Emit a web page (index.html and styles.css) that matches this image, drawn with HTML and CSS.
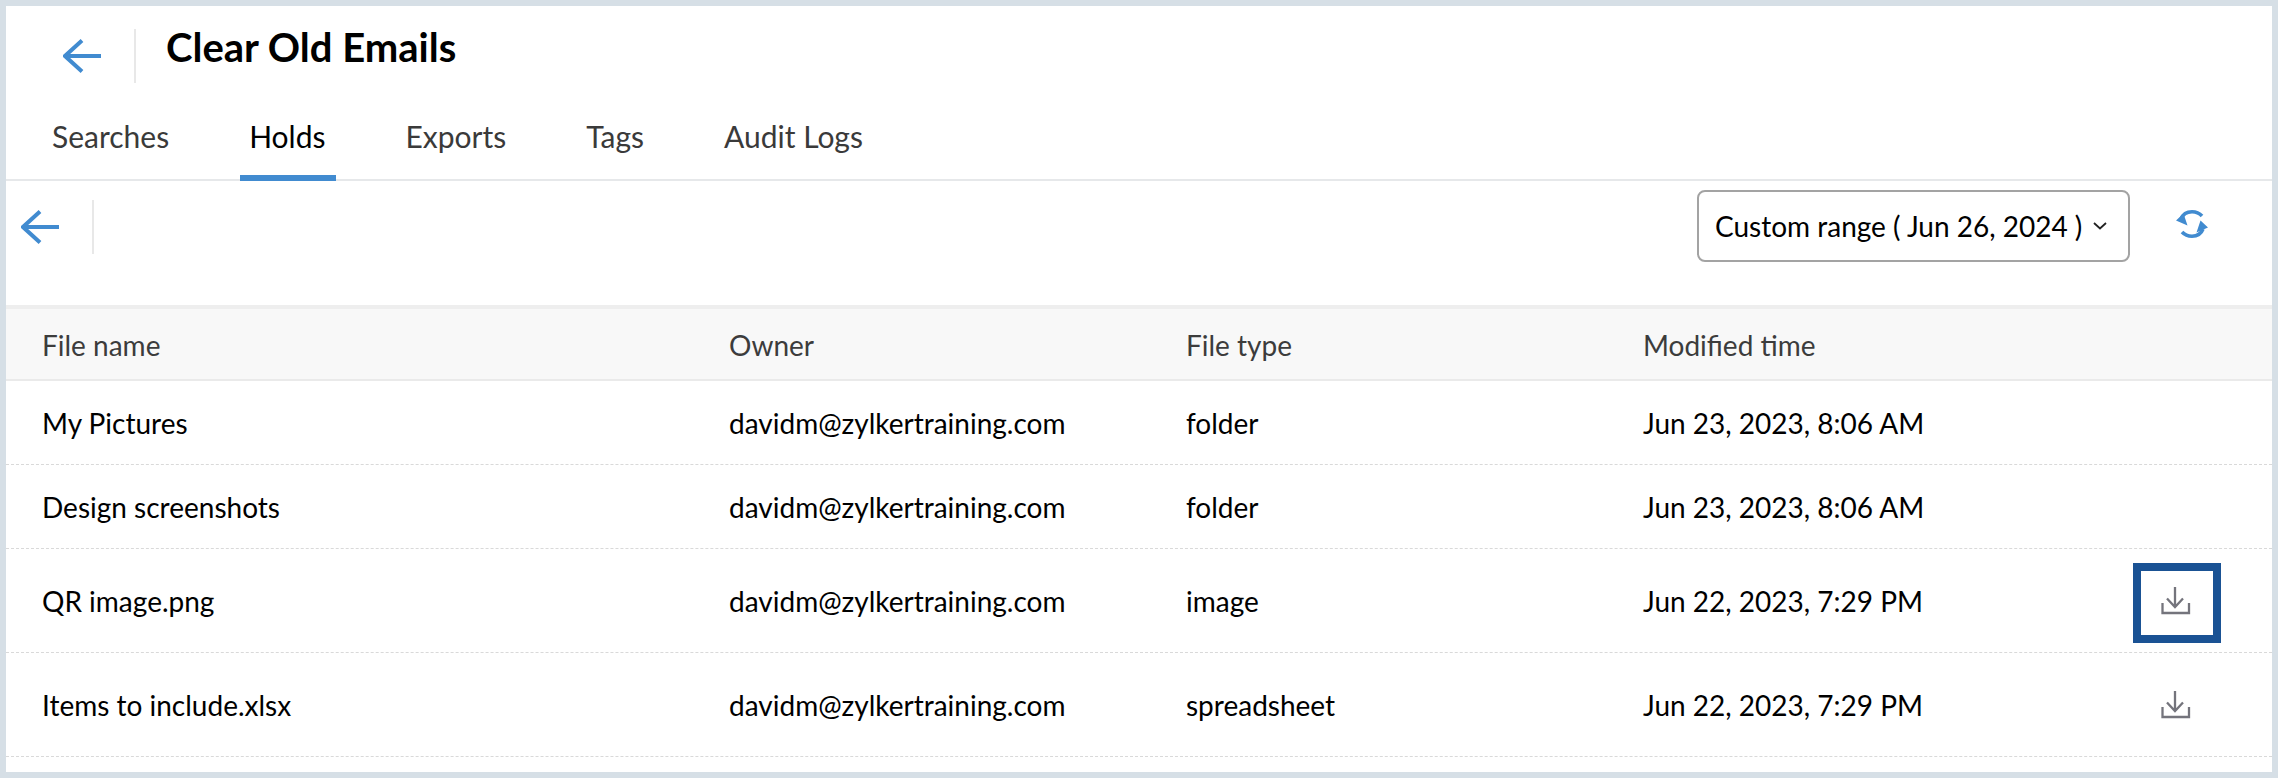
FILE: index.html
```html
<!DOCTYPE html>
<html lang="en">
<head>
<meta charset="utf-8">
<title>Clear Old Emails</title>
<link rel="stylesheet" href="styles.css">
</head>
<body>
<main class="frame">
  <header class="title-bar">
    <button class="back back-main" aria-label="Back">
      <svg class="arrow" viewBox="0 0 38 34"><path d="M38 17H2M19 1.500 2 17l17 15.500"/></svg>
    </button>
    <span class="vdiv"></span>
    <h1 class="title">Clear Old Emails</h1>
  </header>
  <nav class="tabs">
    <a class="tab">Searches</a>
    <a class="tab active">Holds</a>
    <a class="tab">Exports</a>
    <a class="tab">Tags</a>
    <a class="tab">Audit Logs</a>
  </nav>
  <div class="toolbar">
    <button class="back back-sub" aria-label="Back">
      <svg class="arrow" viewBox="0 0 38 34"><path d="M38 17H2M19 1.500 2 17l17 15.500"/></svg>
    </button>
    <span class="vdiv"></span>
    <button class="range">
      <span>Custom range ( Jun 26, 2024 )</span>
      <svg class="chev" viewBox="0 0 14 8"><path d="M1 1l6 5.500L13 1"/></svg>
    </button>
    <button class="refresh" aria-label="Refresh">
      <svg viewBox="0 0 32 28"><path class="arc" d="M5 9C7 4 11 1.800 16 1.800c4 0 7.500 1.500 10 4.200M27 19C25 24 21 26.200 16 26.200c-4 0-7.500-1.500-10-4.200"/><path class="head" d="M0 10.500l11.500 5L7.500 3.500zM32 17.500l-11.500 5L24.500 10.500z"/></svg>
    </button>
  </div>
  <section class="table">
    <div class="row head-row"><span>File name</span><span>Owner</span><span>File type</span><span>Modified time</span><span></span></div>
    <div class="row short"><span>My Pictures</span><span>davidm@zylkertraining.com</span><span>folder</span><span>Jun 23, 2023, 8:06 AM</span><span></span></div>
    <div class="row short"><span>Design screenshots</span><span>davidm@zylkertraining.com</span><span>folder</span><span>Jun 23, 2023, 8:06 AM</span><span></span></div>
    <div class="row tall"><span>QR image.png</span><span>davidm@zylkertraining.com</span><span>image</span><span>Jun 22, 2023, 7:29 PM</span>
      <button class="dl focused" aria-label="Download"><svg viewBox="0 0 30 28"><path d="M14 0v20M6 11.500l8 8.500 8-8.500M1.500 16v10h26.500V16"/></svg></button></div>
    <div class="row tall"><span>Items to include.xlsx</span><span>davidm@zylkertraining.com</span><span>spreadsheet</span><span>Jun 22, 2023, 7:29 PM</span>
      <button class="dl" aria-label="Download"><svg viewBox="0 0 30 28"><path d="M14 0v20M6 11.500l8 8.500 8-8.500M1.500 16v10h26.500V16"/></svg></button></div>
  </section>
</main>
</body>
</html>
```
FILE: styles.css
```css
* { box-sizing: border-box; }
html, body { margin: 0; height: 100%; }
body { background: #d6dfe6; padding: 6px; font-family: Lato, "Noto Sans", sans-serif; color: #000; }
button { background: none; border: 0; padding: 0; font: inherit; color: inherit; }
.frame { background: #fff; height: 766px; display: flex; flex-direction: column; }
.title-bar { height: 78px; display: flex; align-items: flex-start; }
.back { display: flex; align-items: center; }
.arrow { display: block; width: 38px; height: 34px; fill: none; stroke: #418bd0; stroke-width: 4; }
.back-main { margin: 33px 0 0 57px; }
.vdiv { display: block; width: 2px; background: #e8e8e8; height: 54px; }
.title-bar .vdiv { margin: 23px 0 0 33px; }
.title { margin: 16px 0 0 30px; font-size: 40px; line-height: 50px; font-weight: 700; letter-spacing: 0; }
.tabs { height: 97px; display: flex; padding: 0 0 0 46px; border-bottom: 2px solid #e6e8ea; gap: 80px; }
.tab { font-size: 30px; line-height: 36px; color: #3a3a3a; padding: 34px 0 0; position: relative; }
.tab.active { color: #000; }
.tab.active::after { content: ""; position: absolute; left: -9px; right: -11px; bottom: -2px; height: 6px; background: #418bd0; }
.toolbar { height: 124px; display: flex; align-items: flex-start; }
.back-sub { margin: 29px 0 0 15px; }
.toolbar .vdiv { margin: 19px 0 0 33px; }
.range { margin: 9px 0 0 auto; width: 433px; height: 72px; border: 2px solid #a3a3a3; border-radius: 8px; background: #fff; display: flex; align-items: center; padding: 0 21px 0 16px; font-size: 28px; justify-content: space-between; white-space: nowrap; }
.chev { width: 14px; height: 8px; fill: none; stroke: #222; stroke-width: 1.800; }
.refresh { margin: 29px 64px 0 46px; }
.refresh svg { display: block; width: 32px; height: 28px; }
.arc { fill: none; stroke: #418bd0; stroke-width: 3.600; }
.head { fill: #418bd0; }
.table { display: flex; flex-direction: column; }
.row { display: grid; grid-template-columns: 687px 457px 457px 1fr auto; align-items: center; padding: 0 51px 0 36px; font-size: 28px; border-bottom: 1px dashed #d9d9d9; }
.head-row { height: 76px; background: #f8f8f8; border-top: 4px solid #eee; border-bottom: 2px solid #eaeaea; color: #3c3c3c; font-size: 28px; padding-top: 1px; }
.short { height: 84px; }
.tall { height: 104px; }
.dl { width: 88px; height: 80px; display: flex; align-items: center; justify-content: center; border: 8px solid transparent; padding-right: 2px; }
.dl.focused { border-color: #1a5294; margin-top: 4px; padding-bottom: 4px; }
.dl svg { display: block; width: 30px; height: 28px; fill: none; stroke: #74747c; stroke-width: 2.300; }
```
